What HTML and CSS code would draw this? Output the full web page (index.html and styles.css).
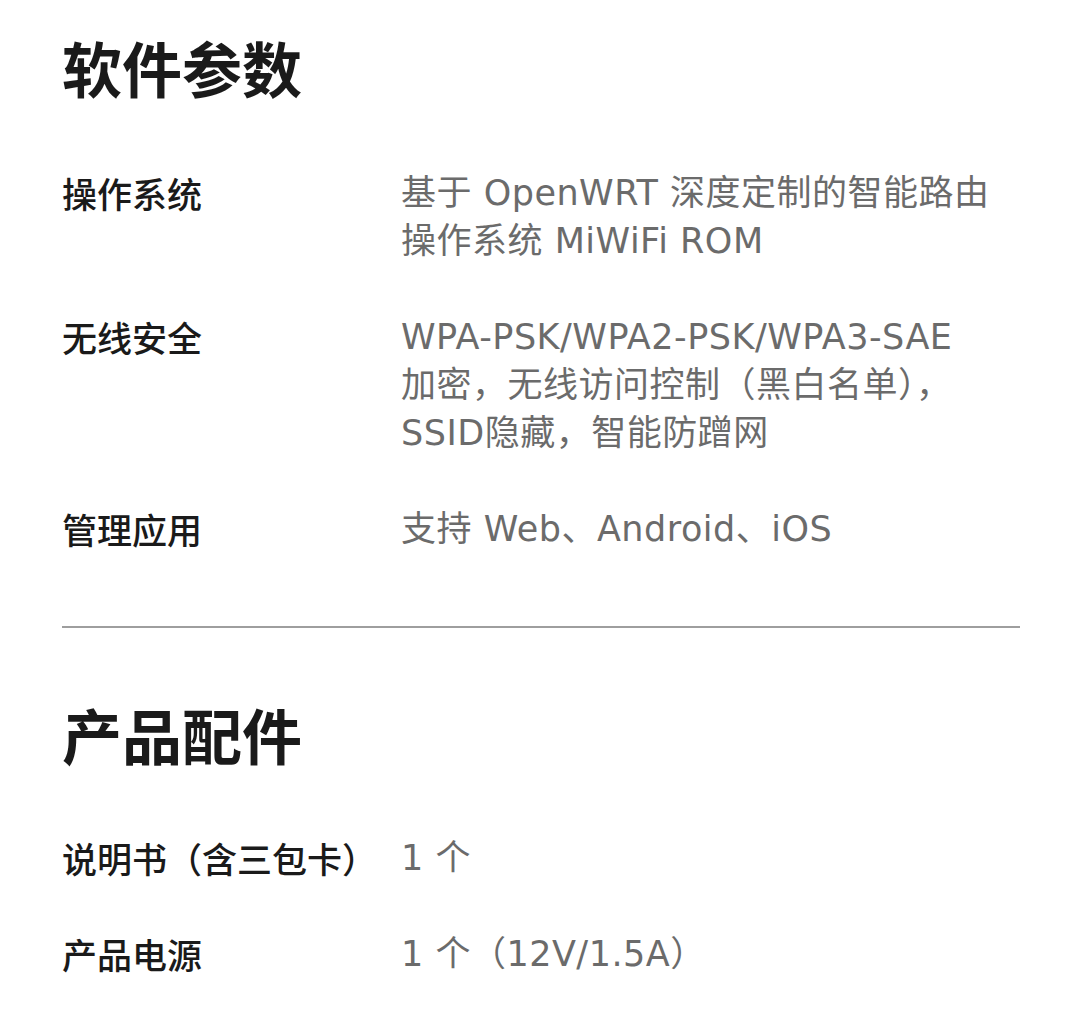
FILE: index.html
```html
<!DOCTYPE html>
<html lang="zh-CN">
<head>
<meta charset="utf-8">
<title>软件参数</title>
<link rel="stylesheet" href="styles.css">
</head>
<body>
<main class="page">
  <section class="spec-section">
    <h2 class="spec-title">软件参数</h2>
    <dl class="spec-list">
      <div class="spec-row">
        <dt class="spec-label">操作系统</dt>
        <dd class="spec-value">基于 OpenWRT 深度定制的智能路由<br>操作系统 MiWiFi ROM</dd>
      </div>
      <div class="spec-row">
        <dt class="spec-label">无线安全</dt>
        <dd class="spec-value">WPA-PSK/WPA2-PSK/WPA3-SAE<br>加密，无线访问控制（黑白名单），<br>SSID隐藏，智能防蹭网</dd>
      </div>
      <div class="spec-row">
        <dt class="spec-label">管理应用</dt>
        <dd class="spec-value">支持 Web、Android、iOS</dd>
      </div>
    </dl>
  </section>
  <hr class="divider">
  <section class="spec-section second">
    <h2 class="spec-title">产品配件</h2>
    <dl class="spec-list">
      <div class="spec-row">
        <dt class="spec-label">说明书（含三包卡）</dt>
        <dd class="spec-value">1 个</dd>
      </div>
      <div class="spec-row">
        <dt class="spec-label">产品电源</dt>
        <dd class="spec-value">1 个（12V/1.5A）</dd>
      </div>
    </dl>
  </section>
</main>
</body>
</html>
```
FILE: styles.css
```css
html, body {
  margin: 0;
  padding: 0;
  background: #ffffff;
}
body {
  font-family: "Noto Sans CJK SC", "Noto Sans", sans-serif;
  color: #1a1a1a;
}
.page {
  padding: 27px 60px 0 62px;
}
.spec-title {
  margin: 0 0 62px 0;
  font-size: 60px;
  line-height: 80px;
  font-weight: 700;
  color: #1a1a1a;
}
.spec-list {
  margin: 0;
  display: flex;
  flex-direction: column;
  gap: 48px;
}
.spec-row {
  display: grid;
  grid-template-columns: 339px 1fr;
}
.spec-label {
  margin: 0;
  font-size: 35px;
  line-height: 48px;
  font-weight: 500;
  color: #1a1a1a;
  white-space: nowrap;
}
.spec-value {
  margin: 0;
  font-family: "DejaVu Sans", "Noto Sans CJK SC", sans-serif;
  font-size: 35px;
  line-height: 48px;
  font-weight: 400;
  letter-spacing: 0.5px;
  color: #6b6b6b;
  white-space: nowrap;
}
.divider {
  margin: 73px 0 66px 0;
  border: 0;
  height: 2px;
  background: #9e9e9e;
}
.second .spec-title {
  margin-bottom: 60px;
}
```
